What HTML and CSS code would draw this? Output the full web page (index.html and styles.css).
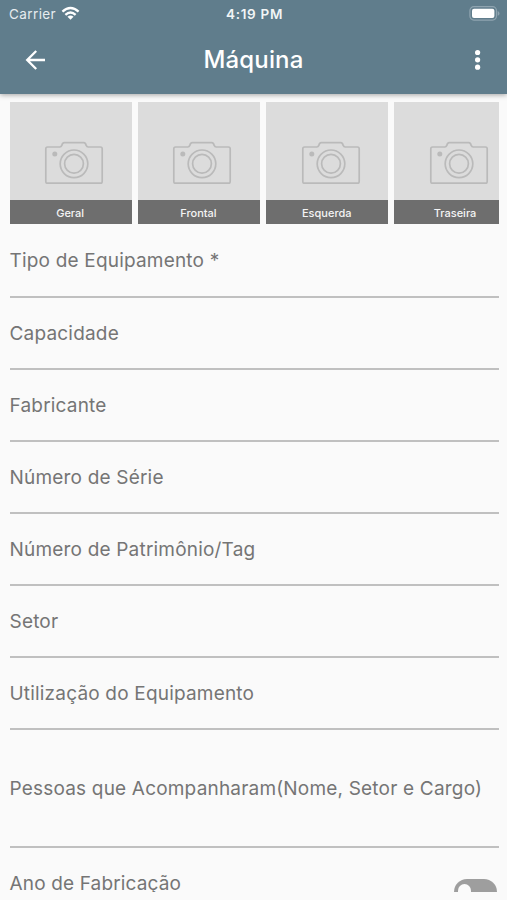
FILE: index.html
```html
<!DOCTYPE html>
<html lang="pt-BR">
<head>
<meta charset="utf-8">
<title>Máquina</title>
<link rel="stylesheet" href="styles.css">
</head>
<body>
<svg class="defs" width="0" height="0">
  <symbol id="camera" viewBox="0 0 60 46">
    <g fill="none" stroke="#bababa" stroke-width="1.7" stroke-linejoin="round">
      <path d="M3.5 7H15.8Q17.2 7 17.8 5.4Q18.6 2.7 20.4 2.7H39.6Q41.4 2.7 42.2 5.4Q42.8 7 44.2 7H56.5Q58.2 7 58.2 8.7V41.5Q58.2 43.2 56.5 43.2H3.5Q1.8 43.2 1.8 41.5V8.7Q1.8 7 3.5 7Z"/>
      <circle cx="30" cy="23.8" r="13.8"/>
      <circle cx="30" cy="23.8" r="9.4"/>
    </g>
    <circle cx="10.8" cy="14" r="2.5" fill="#bababa"/>
  </symbol>
</svg>
<div class="screen">
  <header class="header">
    <div class="status">
      <div class="carrier">
        <span class="carrier-name">Carrier</span>
        <svg class="wifi" width="19" height="15" viewBox="0 0 20 15">
          <g fill="none" stroke="#fff" stroke-width="2.5">
            <path d="M1.5 5.5Q10 -1.9 18.5 5.5"/>
            <path d="M4.6 8.9Q10 4.1 15.4 8.9"/>
          </g>
          <path d="M6.8 10.9Q10 8.2 13.2 10.9L10 14.2Z" fill="#fff"/>
        </svg>
      </div>
      <span class="time">4:19 PM</span>
      <svg class="battery" width="31" height="15" viewBox="0 0 31 15">
        <rect x="0.9" y="0.7" width="26.6" height="13.4" rx="4" fill="none" stroke="#8fa4b0" stroke-width="1.2"/>
        <rect x="3" y="2.8" width="22.4" height="9.2" rx="2" fill="#fff"/>
        <path d="M28.7 5Q30.5 5.7 30.5 7.4Q30.5 9.1 28.7 9.8Z" fill="#8fa4b0"/>
      </svg>
    </div>
    <div class="appbar">
      <svg class="back" width="22" height="22" viewBox="0 0 22 22" fill="none" stroke="#fff" stroke-width="2.3">
        <path d="M20 11H3M11.2 2L2.2 11L11.2 20"/>
      </svg>
      <h1 class="title">Máquina</h1>
      <svg class="more" width="8" height="22" viewBox="0 0 8 22" fill="#fff">
        <circle cx="3.6" cy="3.5" r="2.6"/><circle cx="3.6" cy="10.8" r="2.6"/><circle cx="3.6" cy="18.2" r="2.6"/>
      </svg>
    </div>
  </header>
  <main class="content">
    <div class="photos">
      <div class="photo"><svg class="camera"><use href="#camera"/></svg><span class="caption">Geral</span></div>
      <div class="photo"><svg class="camera"><use href="#camera"/></svg><span class="caption">Frontal</span></div>
      <div class="photo"><svg class="camera"><use href="#camera"/></svg><span class="caption">Esquerda</span></div>
      <div class="photo"><svg class="camera"><use href="#camera"/></svg><span class="caption">Traseira</span></div>
    </div>
    <div class="field first">Tipo de Equipamento *</div>
    <div class="field">Capacidade</div>
    <div class="field">Fabricante</div>
    <div class="field">Número de Série</div>
    <div class="field">Número de Patrimônio/Tag</div>
    <div class="field">Setor</div>
    <div class="field">Utilização do Equipamento</div>
    <div class="field tall">Pessoas que Acompanharam(Nome, Setor e Cargo)</div>
    <div class="toggle-row">
      <span>Ano de Fabricação</span>
      <span class="switch"><span class="knob"></span></span>
    </div>
  </main>
</div>
</body>
</html>
```
FILE: styles.css
```css
* { box-sizing: border-box; }
body {
  margin: 0;
  background: #fafafa;
  font-family: Inter, "Liberation Sans", sans-serif;
}
.defs { display: block; }
.screen {
  width: 507px;
  height: 900px;
  overflow: hidden;
  display: flex;
  flex-direction: column;
}
.header {
  flex: none;
  height: 94px;
  background: #607d8c;
  color: #fff;
  box-shadow: 0 1px 5px rgba(0, 0, 0, 0.35);
  position: relative;
}
.status {
  height: 27px;
  padding: 0 7px 0 9px;
  display: grid;
  grid-template-columns: 1fr auto 1fr;
  align-items: center;
  font-size: 13.5px;
}
.carrier { display: flex; align-items: center; gap: 5px; color: #e6ecef; letter-spacing: 0.4px; }
.wifi { margin-top: -1px; }
.time { font-weight: 600; font-size: 13.5px; letter-spacing: 0.7px; color: #f2f5f6; }
.battery { justify-self: end; margin-top: -1px; }
.appbar {
  height: 66px;
  padding: 0 25px;
  display: grid;
  grid-template-columns: 1fr auto 1fr;
  align-items: center;
}
.title { margin: 0; font-size: 24px; font-weight: 500; line-height: 30px; letter-spacing: 0.15px; }
.more { justify-self: end; }
.content {
  height: 798px;
  padding: 8px 8.5px 0 9.5px;
  overflow: hidden;
}
.photos { display: flex; gap: 6px; overflow: hidden; }
.photo {
  flex: none;
  width: 122.3px;
  height: 122px;
  background: #dcdcdc;
  display: flex;
  flex-direction: column;
  align-items: center;
}
.camera { width: 60px; height: 46px; margin: 38px 0 0 7px; }
.caption {
  width: 100%;
  height: 24px;
  margin-top: auto;
  padding-right: 1px;
  background: #6e6e6e;
  color: #f4f4f4;
  text-align: center;
  font-size: 11px;
  font-weight: 500;
  line-height: 26px;
}
.field {
  height: 72px;
  padding-top: 23px;
  border-bottom: 2px solid #c0c0c0;
  color: #757575;
  font-size: 19px;
  line-height: 26px;
  letter-spacing: 0.19px;
  white-space: nowrap;
}
.first { height: 74px; padding-top: 24px; }
.tall { height: 118px; padding-top: 46px; }
.toggle-row {
  display: flex;
  justify-content: space-between;
  padding: 23px 2px 0 0;
  color: #757575;
  font-size: 19px;
  line-height: 26px;
  letter-spacing: 0.15px;
}
.switch {
  width: 43px;
  height: 26px;
  margin-top: 8px;
  padding: 4.5px;
  border-radius: 13px;
  background: #9e9e9e;
}
.knob { display: block; width: 13px; height: 17px; border-radius: 8px; background: #fafafa; }
```
